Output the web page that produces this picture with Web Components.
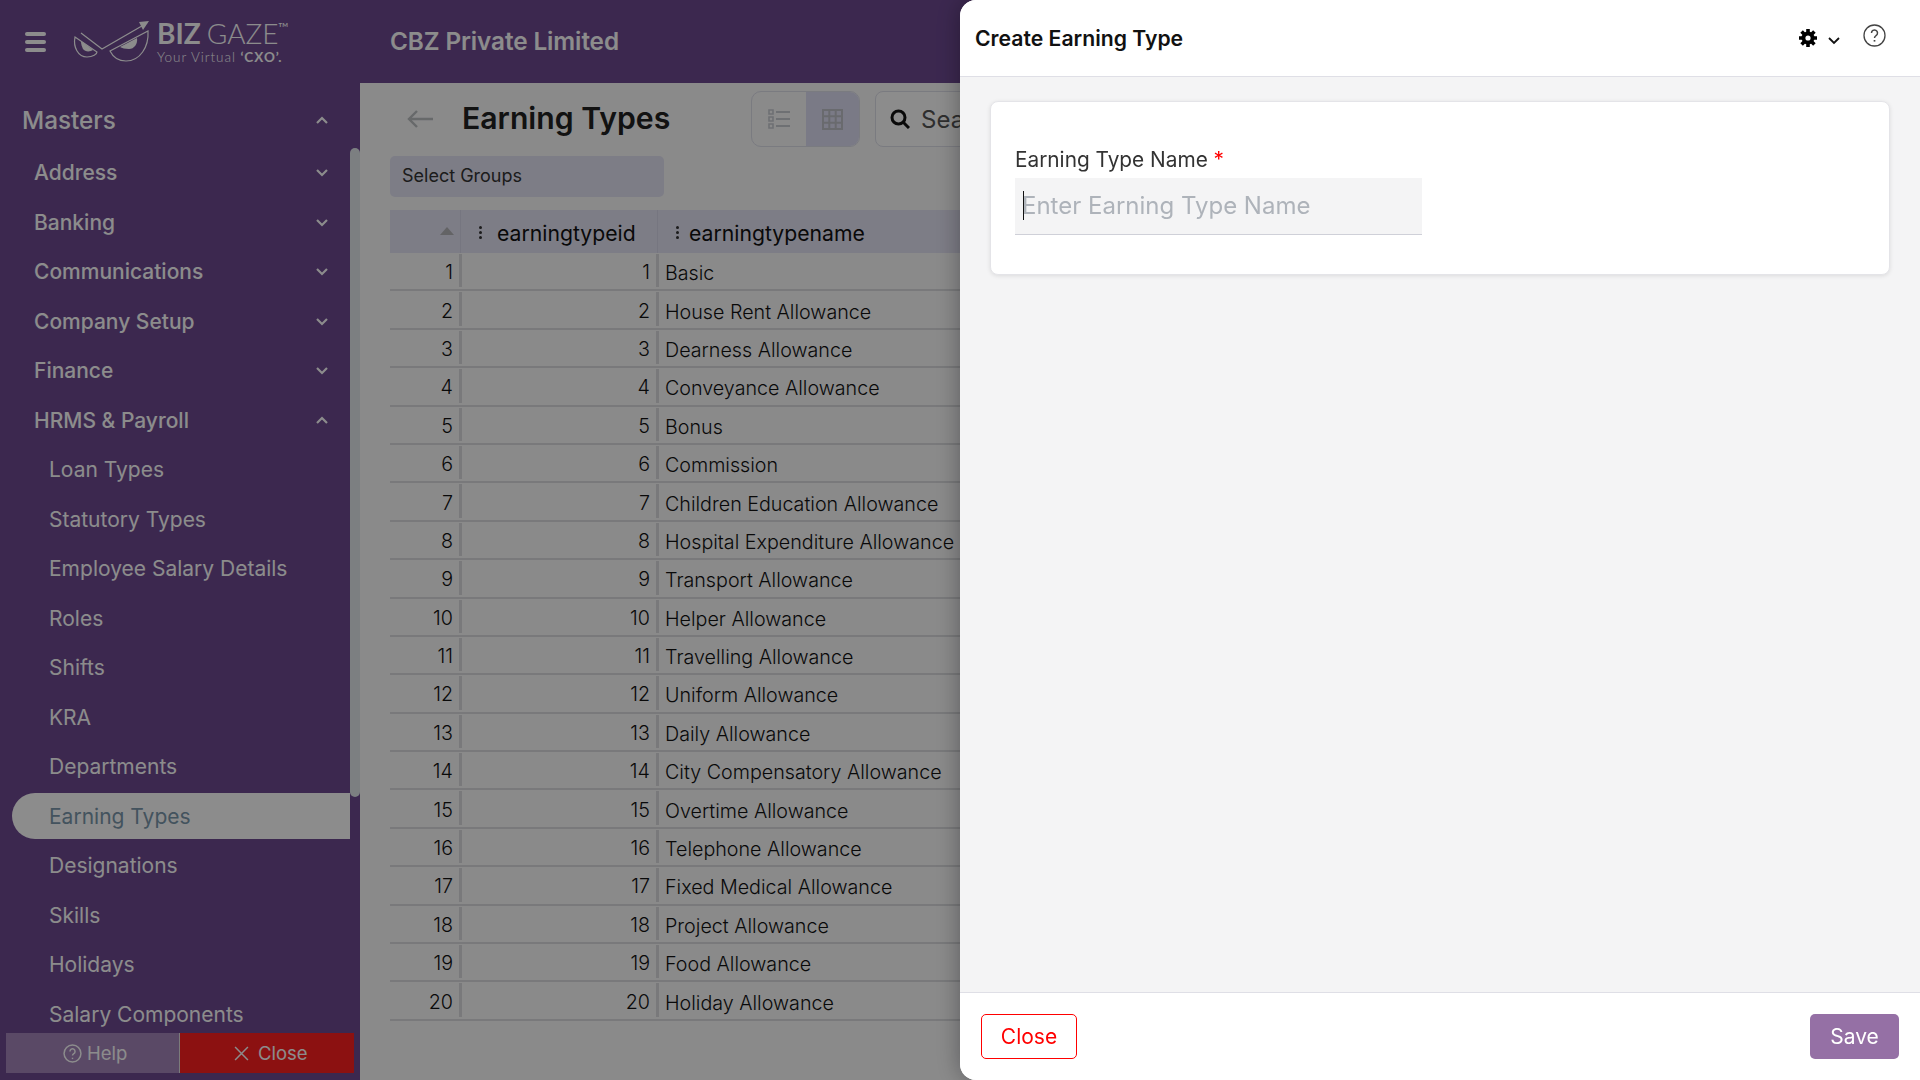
<!DOCTYPE html>
<html>
<head>
<meta charset="utf-8">
<title>Earning Types</title>
<style>
  html, body { margin: 0; height: 100%; overflow: hidden; }
  body { font-family: Inter, "Liberation Sans", sans-serif; }
</style>
</head>
<body>

<app-shell>
  <top-bar slot="top" company="CBZ Private Limited"></top-bar>
  <side-nav slot="side">
    <nav-item level="0" chevron="up">Masters</nav-item>
    <nav-item level="1" chevron="down">Address</nav-item>
    <nav-item level="1" chevron="down">Banking</nav-item>
    <nav-item level="1" chevron="down">Communications</nav-item>
    <nav-item level="1" chevron="down">Company Setup</nav-item>
    <nav-item level="1" chevron="down">Finance</nav-item>
    <nav-item level="1" chevron="up">HRMS &amp; Payroll</nav-item>
    <nav-item level="2">Loan Types</nav-item>
    <nav-item level="2">Statutory Types</nav-item>
    <nav-item level="2">Employee Salary Details</nav-item>
    <nav-item level="2">Roles</nav-item>
    <nav-item level="2">Shifts</nav-item>
    <nav-item level="2">KRA</nav-item>
    <nav-item level="2">Departments</nav-item>
    <nav-item level="2" active>Earning Types</nav-item>
    <nav-item level="2">Designations</nav-item>
    <nav-item level="2">Skills</nav-item>
    <nav-item level="2">Holidays</nav-item>
    <nav-item level="2">Salary Components</nav-item>
  </side-nav>
  <list-page slot="main" heading="Earning Types"></list-page>
</app-shell>

<page-backdrop></page-backdrop>
<create-drawer heading="Create Earning Type"></create-drawer>

<script>
  function defineEl(name, html, extra) {
    const tpl = document.createElement('template');
    tpl.innerHTML = html;
    class El extends HTMLElement {
      connectedCallback() {
        if (this.shadowRoot) return;
        this.attachShadow({ mode: 'open' });
        this.shadowRoot.appendChild(tpl.content.cloneNode(true));
        if (extra) extra.call(this, this.shadowRoot);
      }
    }
    customElements.define(name, El);
  }

  const chevUp = '<svg width="14" height="9" viewBox="0 0 14 9"><path d="M2 7l5-5 5 5" fill="none" stroke="#fff" stroke-width="2.2"/></svg>';
  const chevDown = '<svg width="14" height="9" viewBox="0 0 14 9"><path d="M2 2l5 5 5-5" fill="none" stroke="#fff" stroke-width="2.2"/></svg>';

  defineEl('app-shell', `
    <style>
      :host { display: grid; grid-template: 83px 997px / 360px 1560px; width: 1920px; height: 1080px; overflow: hidden; }
      .top { grid-column: 1 / 3; }
    </style>
    <div class="top"><slot name="top"></slot></div>
    <slot name="side"></slot>
    <slot name="main"></slot>
  `);

  defineEl('top-bar', `
    <style>
      :host { display: flex; align-items: center; height: 83px; background: #6d4991; color: #fff; font-family: Inter, sans-serif; }
      .burger { width: 21px; margin-left: 25px; display: flex; flex-direction: column; gap: 4px; }
      .burger i { display: block; height: 4px; border-radius: 2px; background: #fff; }
      svg { margin-left: 26px; flex: none; }
      .brand { margin-left: 7px; width: 233px; padding-bottom: 2px; }
      .name { font-family: Lato, sans-serif; font-size: 28px; line-height: 33px; display: flex; }
      .name b { font-weight: 700; margin-right: 6px; }
      .name span { font-weight: 300; }
      .name sup { font-size: 6px; line-height: 8px; font-weight: 700; margin: 4px 0 0 0; }
      .tag { font-family: Lato, sans-serif; font-size: 13.500px; line-height: 15px; letter-spacing: .95px; font-weight: 300; }
      .tag b { font-weight: 700; }
      .co { font-size: 24.300px; font-weight: 600; letter-spacing: -.1px; padding-bottom: 1px; }
    </style>
    <div class="burger"><i></i><i></i><i></i></div>
    <svg width="78" height="45" viewBox="0 0 78 45" fill="none" stroke="#fff" stroke-width="1.2">
      <path d="M9 14L30 30 75 4"/>
      <path d="M77 2l-10 1 4 8z" fill="#fff" stroke="none"/>
      <path d="M3 18C1 28 6 38 15 38 21 38 25 35 25 33L3 18z"/>
      <path d="M9 22l12 9c-3 2-8 2-10-1-1-2-2-5-2-8z" fill="#fff" stroke="none"/>
      <path d="M38 32C42 40 48 42 54 42 68 42 77 28 76 12L38 32z"/>
      <path d="M48 28l17-9c1 6-3 11-8 11-4 0-7-1-9-2z" fill="#fff" stroke="none"/>
    </svg>
    <div class="brand">
      <div class="name"><b>BIZ</b><span>GAZE</span><sup>TM</sup></div>
      <div class="tag">Your Virtual <b>‘CXO’.</b></div>
    </div>
    <div class="co" id="co"></div>
  `, function (root) {
    root.getElementById('co').textContent = this.getAttribute('company');
  });

  defineEl('side-nav', `
    <style>
      :host { display: block; position: relative; height: 997px; background: #6d4991; overflow: hidden; }
      .list { width: 350px; padding-top: 13px; }
      .thumb { position: absolute; left: 350px; top: 65px; width: 10px; height: 649px; border-radius: 5px; background: #e2e8ec; }
      .foot { position: absolute; left: 6px; top: 950px; width: 348px; height: 40px; display: flex; font-size: 18.500px; color: #fff; }
      .foot div { flex: 1; display: flex; align-items: center; justify-content: center; gap: 5px; box-sizing: border-box; }
      .help { background: #a486bb; border-right: 1px solid #e0e0e0; padding-left: 6px; }
      .close { background: #ff2020; gap: 9px !important; padding-left: 8px; }
    </style>
    <div class="list"><slot></slot></div>
    <div class="thumb"></div>
    <div class="foot">
      <div class="help">
        <svg width="19" height="19" viewBox="0 0 18 18" fill="none" stroke="#fff" stroke-width="1.4"><circle cx="9" cy="9" r="8"/><path d="M6.6 7a2.4 2.4 0 1 1 3.6 2.1c-.8.5-1.200 1-1.200 1.900"/><path d="M9 13v1.300"/></svg>
        <span>Help</span>
      </div>
      <div class="close">
        <svg width="15" height="15" viewBox="0 0 14 14" fill="none" stroke="#fff" stroke-width="1.4"><path d="M1 1l12 12M13 1L1 13"/></svg>
        <span>Close</span>
      </div>
    </div>
  `);

  defineEl('nav-item', `
    <style>
      :host { display: flex; align-items: center; height: 49.500px; box-sizing: border-box; color: #fff; font-size: 21px; position: relative; }
      :host([level="0"]) { height: 52px; font-size: 24.300px; padding: 0 0 5px 22px; font-weight: 500; }
      :host([level="1"]) { font-size: 21px; padding-left: 34px; font-weight: 500; }
      :host([level="2"]) { padding-left: 49px; }
      :host([active]) { color: #7b97ab; }
      :host([active])::before { content: ""; position: absolute; z-index: 0; left: 12px; right: 0; top: 1px; height: 46px; border-radius: 23px 0 0 23px; background: #fff; }
      span { position: relative; white-space: nowrap; }
      #chev { position: absolute; left: 315px; top: 20px; line-height: 0; }
    </style>
    <span><slot></slot></span>
    <div id="chev"></div>
  `, function (root) {
    const c = this.getAttribute('chevron');
    root.getElementById('chev').innerHTML = c === 'up' ? chevUp : c === 'down' ? chevDown : '';
  });

  defineEl('list-page', `
    <style>
      :host { display: block; height: 997px; background: #fbfbfc; padding: 8px 0 0 30px; box-sizing: border-box; overflow: hidden; color: #222; font-family: Inter, sans-serif; }
      .head { display: flex; align-items: center; height: 56px; width: 1500px; }
      .back { margin-left: 16px; width: 28px; line-height: 0; }
      h1 { margin: 0 0 2px 28px; font-size: 30.200px; font-weight: 600; width: 289px; white-space: nowrap; color: #222; }
      .toggle { display: flex; width: 109px; height: 56px; box-sizing: border-box; border: 1px solid #dfe0ea; border-radius: 10px; overflow: hidden; }
      .toggle div { flex: 1; display: flex; align-items: center; justify-content: center; }
      .toggle .on { background: #dedff5; }
      .search { margin-left: 15px; width: 300px; height: 56px; box-sizing: border-box; border: 1px solid #dfe0ea; border-radius: 8px; display: flex; align-items: center; padding-left: 14px; gap: 11px; font-size: 24px; color: #555; background: #fff; }
      .groups { margin-top: 9px; width: 274px; height: 41px; background: #e4e3f4; border-radius: 5px; box-sizing: border-box; padding: 0 0 2px 12px; display: flex; align-items: center; font-size: 18px; color: #333; }
    </style>
    <div class="head">
      <div class="back"><svg width="28" height="20" viewBox="0 0 28 20" fill="none" stroke="#bcbfc2" stroke-width="2.4"><path d="M27 10H3M11 2l-8 8 8 8"/></svg></div>
      <h1 id="h"></h1>
      <div class="toggle">
        <div><svg width="22" height="20" viewBox="0 0 22 20" fill="none" stroke="#c9ccd2" stroke-width="2"><path d="M8 3h14M8 10h14M8 17h14"/><path d="M1 1h4v4H1zM1 8h4v4H1zM1 15h4v4H1z" stroke-width="1.6"/></svg></div>
        <div class="on"><svg width="21" height="21" viewBox="0 0 21 21" fill="none" stroke="#bfc1c8" stroke-width="2"><path d="M1 1h19v19H1zM1 7.300h19M1 13.700h19M7.300 1v19M13.700 1v19"/></svg></div>
      </div>
      <div class="search">
        <svg width="20" height="20" viewBox="0 0 20 20" fill="none" stroke="#111" stroke-width="3"><circle cx="8.500" cy="8.500" r="6.500"/><path d="M13 13l6 6"/></svg>
        <span>Search</span>
      </div>
    </div>
    <div class="groups">Select Groups</div>
    <earning-grid></earning-grid>
  `, function (root) {
    root.getElementById('h').textContent = this.getAttribute('heading');
  });

  const earningNames = ['Basic', 'House Rent Allowance', 'Dearness Allowance', 'Conveyance Allowance', 'Bonus', 'Commission',
    'Children Education Allowance', 'Hospital Expenditure Allowance', 'Transport Allowance', 'Helper Allowance',
    'Travelling Allowance', 'Uniform Allowance', 'Daily Allowance', 'City Compensatory Allowance', 'Overtime Allowance',
    'Telephone Allowance', 'Fixed Medical Allowance', 'Project Allowance', 'Food Allowance', 'Holiday Allowance'];

  defineEl('earning-grid', `
    <style>
      :host { display: block; margin-top: 13px; width: 1000px; font-size: 19.700px; font-weight: 300; color: #111; }
      .hd { display: grid; grid-template-columns: 71px 197px 1fr; height: 43px; background: #e4e3f4; font-size: 21.200px; font-weight: 400; }
      .hd > div { display: flex; align-items: center; border-right: 1px solid #d8d7ea; box-sizing: border-box; padding-top: 2px; }
      .sort { justify-content: flex-end; padding-right: 6px; }
      .sort i { border: 7px solid transparent; border-top: 0; border-bottom: 8px solid #b5b5b8; margin-bottom: 4px; }
      .k { width: 3px; display: inline-flex; flex-direction: column; gap: 2px; margin-left: 18px; margin-right: 15px; }
      .k.b { margin-right: 10px; }
      .k i { width: 3px; height: 3px; border-radius: 50%; background: #333; }
      .row { display: grid; grid-template-columns: 72px 197px 1fr; height: 38.400px; box-sizing: border-box; border-bottom: 2px solid #dcdde0; align-items: stretch; }
      .row div { display: flex; align-items: center; padding-top: 4px; }
      .row .n { justify-content: flex-end; padding-right: 6px; margin-bottom: 2px; margin-top: 1px; padding-top: 3px; border-right: 3px solid #dcdde0; box-sizing: border-box; }
      .row .t { padding-left: 6px; white-space: nowrap; }
    </style>
    <div class="hd">
      <div class="sort"><i></i></div>
      <div><span class="k"><i></i><i></i><i></i></span>earningtypeid</div>
      <div><span class="k b"><i></i><i></i><i></i></span>earningtypename</div>
    </div>
    <div id="rows"></div>
  `, function (root) {
    root.getElementById('rows').innerHTML = earningNames.map((n, i) =>
      `<div class="row"><div class="n">${i + 1}</div><div class="n">${i + 1}</div><div class="t">${n}</div></div>`).join('');
  });

  defineEl('page-backdrop', `
    <style>
      :host { display: block; position: fixed; inset: 0; background: rgba(0, 0, 0, .45); }
    </style>
  `);

  defineEl('create-drawer', `
    <style>
      :host { display: flex; flex-direction: column; position: fixed; left: 960px; top: 0; width: 960px; height: 1080px; background: #f4f4f5; border-radius: 16px 0 0 16px; overflow: hidden; box-shadow: 0 0 24px rgba(0, 0, 0, .35); color: #222; font-family: Inter, sans-serif; }
      header { height: 77px; box-sizing: border-box; background: #fff; border-bottom: 1px solid #dfdfe6; display: flex; align-items: center; padding-left: 15px; flex: none; }
      h2 { margin: 0 0 1px; flex: 1; font-size: 21.200px; font-weight: 600; color: #111; }
      .ico { display: flex; align-items: center; line-height: 0; }
      .main { flex: 1; padding: 24px 30px; }
      .card { height: 174px; width: 900px; box-sizing: border-box; background: #fff; border: 1px solid #e4e4e8; border-radius: 8px; box-shadow: 0 1px 4px rgba(0, 0, 0, .1); padding: 44px 24px 0; }
      label { display: block; font-size: 20.800px; line-height: 28px; color: #333; font-weight: 400; }
      label b { color: #f00; font-weight: 400; }
      .field { position: relative; margin-top: 4px; width: 407px; height: 57px; }
      input { display: block; width: 100%; height: 100%; box-sizing: border-box; border: 0; border-bottom: 1px solid #cfd0d8; background: #f4f4f5; padding: 0 7px 2px; font: 24px Inter, sans-serif; outline: 0; }
      input::placeholder { color: #aeb3ba; opacity: 1; }
      .caret { position: absolute; left: 8px; top: 13px; width: 1px; height: 29px; background: #111; }
      footer { height: 88px; box-sizing: border-box; background: #fff; border-top: 1px solid #dfdfe6; flex: none; display: flex; justify-content: space-between; padding: 21px 21px 0; }
      button { height: 45px; border-radius: 5px; font: 21px Inter, sans-serif; padding: 0; }
      .cancel { width: 96px; background: #fff; border: 1px solid #f00; color: #f00; }
      .save { width: 89px; background: #9570a5; border: 0; color: #fff; }
    </style>
    <header>
      <h2 id="h"></h2>
      <div class="ico" style="margin-left:1px">
        <svg width="20" height="20" viewBox="0 0 20 20" stroke="#000" fill="none">
          <g stroke-width="3.600"><path d="M10 1v18M1 10h18M3.600 3.600l12.800 12.800M16.400 3.600L3.600 16.400"/></g>
          <circle cx="10" cy="10" r="6.500" fill="#000" stroke="none"/>
          <circle cx="10" cy="10" r="2.600" fill="#fff" stroke="none"/>
        </svg>
        <svg style="margin-left:9px;margin-top:4px" width="14" height="9" viewBox="0 0 14 9" fill="none" stroke="#111" stroke-width="1.800"><path d="M2 2l5 5 5-5"/></svg>
      </div>
      <div class="ico" style="margin:-5px 34px 0 22px">
        <svg width="23" height="23" viewBox="0 0 23 23" fill="none" stroke="#444" stroke-width="1.300"><circle cx="11.500" cy="11.500" r="10.500"/><path d="M8.500 9a3 3 0 1 1 4.600 2.500c-1 .7-1.600 1.200-1.600 2.500" stroke-width="1.500"/><path d="M11.500 16v1.600" stroke-width="1.700"/></svg>
      </div>
    </header>
    <div class="main">
      <div class="card">
        <label>Earning Type Name <b>*</b></label>
        <div class="field">
          <input type="text" placeholder="Enter Earning Type Name">
          <span class="caret"></span>
        </div>
      </div>
    </div>
    <footer>
      <button class="cancel">Close</button>
      <button class="save">Save</button>
    </footer>
  `, function (root) {
    root.getElementById('h').textContent = this.getAttribute('heading');
  });
</script>
</body>
</html>
